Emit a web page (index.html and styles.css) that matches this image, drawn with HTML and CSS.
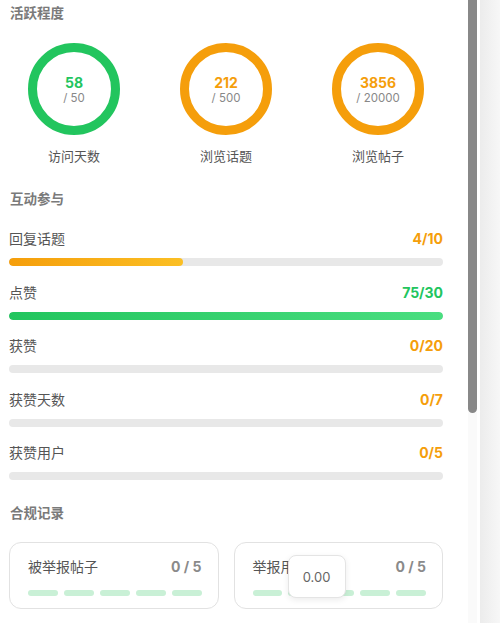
FILE: index.html
```html
<!DOCTYPE html>
<html>
<head>
<meta name="viewport" content="width=device-width, initial-scale=1">
<link rel="stylesheet" href="styles.css">
</head>
<body>

<div class="panel">
  <h3 class="section-title">活跃程度</h3>
  <div class="rings">
    <div class="ring-item">
      <div class="ring green">
        <span class="ring-num">58</span>
        <span class="ring-max">/ 50</span>
      </div>
      <div class="ring-label">访问天数</div>
    </div>
    <div class="ring-item">
      <div class="ring orange">
        <span class="ring-num">212</span>
        <span class="ring-max">/ 500</span>
      </div>
      <div class="ring-label">浏览话题</div>
    </div>
    <div class="ring-item">
      <div class="ring orange">
        <span class="ring-num">3856</span>
        <span class="ring-max">/ 20000</span>
      </div>
      <div class="ring-label">浏览帖子</div>
    </div>
  </div>

  <h3 class="section-title">互动参与</h3>
  <div class="stats">
    <div class="stat">
      <div class="stat-head"><span>回复话题</span><span class="stat-val orange-text">4/10</span></div>
      <div class="bar"><div class="fill fill-orange" style="width:40%"></div></div>
    </div>
    <div class="stat">
      <div class="stat-head"><span>点赞</span><span class="stat-val green-text">75/30</span></div>
      <div class="bar"><div class="fill fill-green" style="width:100%"></div></div>
    </div>
    <div class="stat">
      <div class="stat-head"><span>获赞</span><span class="stat-val orange-text">0/20</span></div>
      <div class="bar"></div>
    </div>
    <div class="stat">
      <div class="stat-head"><span>获赞天数</span><span class="stat-val orange-text">0/7</span></div>
      <div class="bar"></div>
    </div>
    <div class="stat">
      <div class="stat-head"><span>获赞用户</span><span class="stat-val orange-text">0/5</span></div>
      <div class="bar"></div>
    </div>
  </div>

  <h3 class="section-title">合规记录</h3>
  <div class="records">
    <div class="record">
      <div class="record-head"><span>被举报帖子</span><span class="record-val">0 / 5</span></div>
      <div class="segments"><i></i><i></i><i></i><i></i><i></i></div>
    </div>
    <div class="record">
      <div class="record-head"><span>举报用户</span><span class="record-val">0 / 5</span></div>
      <div class="segments"><i></i><i></i><i></i><i></i><i></i></div>
      <div class="tip">0.00</div>
    </div>
  </div>
</div>

<div class="scrollbar"><div class="thumb"></div></div>
<div class="gutter"></div>
<div class="backdrop"></div>

</body>
</html>
```

FILE: styles.css
```css
body, html {
  margin: 0;
  height: 100%;
  overflow: hidden;
  font-family: Inter, "Noto Sans CJK SC", sans-serif;
  background: #fff;
}

body {
  display: flex;
}

.panel {
  width: 468px;
  flex: none;
  box-sizing: border-box;
  padding: 3px 25px 0 9px;
}

.section-title {
  margin: 0 0 0 1px;
  font-size: 13.5px;
  line-height: 20px;
  font-weight: bold;
  color: #7a7a7a;
}

/* ring counters */
.rings {
  display: grid;
  grid-template-columns: repeat(3, 1fr);
  margin: 20px -11px 23px -11px;
}
.ring-item {
  display: flex;
  flex-direction: column;
  align-items: center;
}
.ring {
  width: 92px;
  height: 92px;
  box-sizing: border-box;
  border-radius: 50%;
  border: 9px solid;
  display: flex;
  flex-direction: column;
  align-items: center;
  justify-content: center;
}
.ring.green { border-color: #22c55e; color: #22c55e; }
.ring.orange { border-color: #f59e0b; color: #f59e0b; }
.ring-num {
  font-size: 14px;
  font-weight: bold;
  line-height: 17px;
}
.ring-max {
  font-size: 11.5px;
  line-height: 14px;
  color: #888;
}
.ring-label {
  margin-top: 11px;
  font-size: 13px;
  line-height: 20px;
  color: #555;
}

/* progress rows */
.stats {
  display: flex;
  flex-direction: column;
  gap: 16.5px;
  margin: 20px 0 23px;
}
.stat-head {
  display: flex;
  justify-content: space-between;
  font-size: 14px;
  line-height: 20px;
  color: #555;
}
.stat-val { font-weight: bold; }
.orange-text { color: #f59e0b; }
.green-text { color: #22c55e; }
.bar {
  margin-top: 9px;
  height: 8px;
  border-radius: 4px;
  background: #e8e8e8;
  overflow: hidden;
}
.fill { height: 100%; border-radius: 4px; }
.fill-orange { background: linear-gradient(90deg, #f59e0b, #fbbf24); }
.fill-green { background: linear-gradient(90deg, #22c55e, #4ade80); }

/* compliance cards */
.records {
  display: grid;
  grid-template-columns: 1fr 1fr;
  gap: 15px;
  margin-top: 19px;
}
.record {
  position: relative;
  border: 1px solid #e2e2e2;
  border-radius: 12px;
  padding: 14px 16px 12px 18px;
}
.record-head {
  display: flex;
  justify-content: space-between;
  font-size: 14px;
  line-height: 20px;
  color: #555;
}
.record-val {
  font-weight: bold;
  color: #8a8a8a;
}
.segments {
  display: flex;
  gap: 6px;
  margin-top: 13px;
}
.segments i {
  flex: 1;
  height: 6px;
  border-radius: 3px;
  background: #c9f0d6;
}
.tip {
  position: absolute;
  left: 53px;
  top: 12px;
  width: 58px;
  height: 43px;
  box-sizing: border-box;
  border: 1px solid #e4e4e4;
  border-radius: 8px;
  background: #fff;
  box-shadow: 0 2px 6px rgba(0, 0, 0, 0.08);
  display: flex;
  align-items: center;
  justify-content: center;
  font-size: 13px;
  color: #666;
}

/* fake scrollbar and backdrop */
.scrollbar {
  width: 9px;
  flex: none;
  background: #fafafa;
}
.thumb {
  height: 413px;
  background: #888;
  border-radius: 0 0 5px 5px;
}
.gutter { width: 3px; flex: none; background: #fff; }
.backdrop {
  flex: 1;
  background: linear-gradient(90deg, #ececec, #f7f7f7);
}
```
